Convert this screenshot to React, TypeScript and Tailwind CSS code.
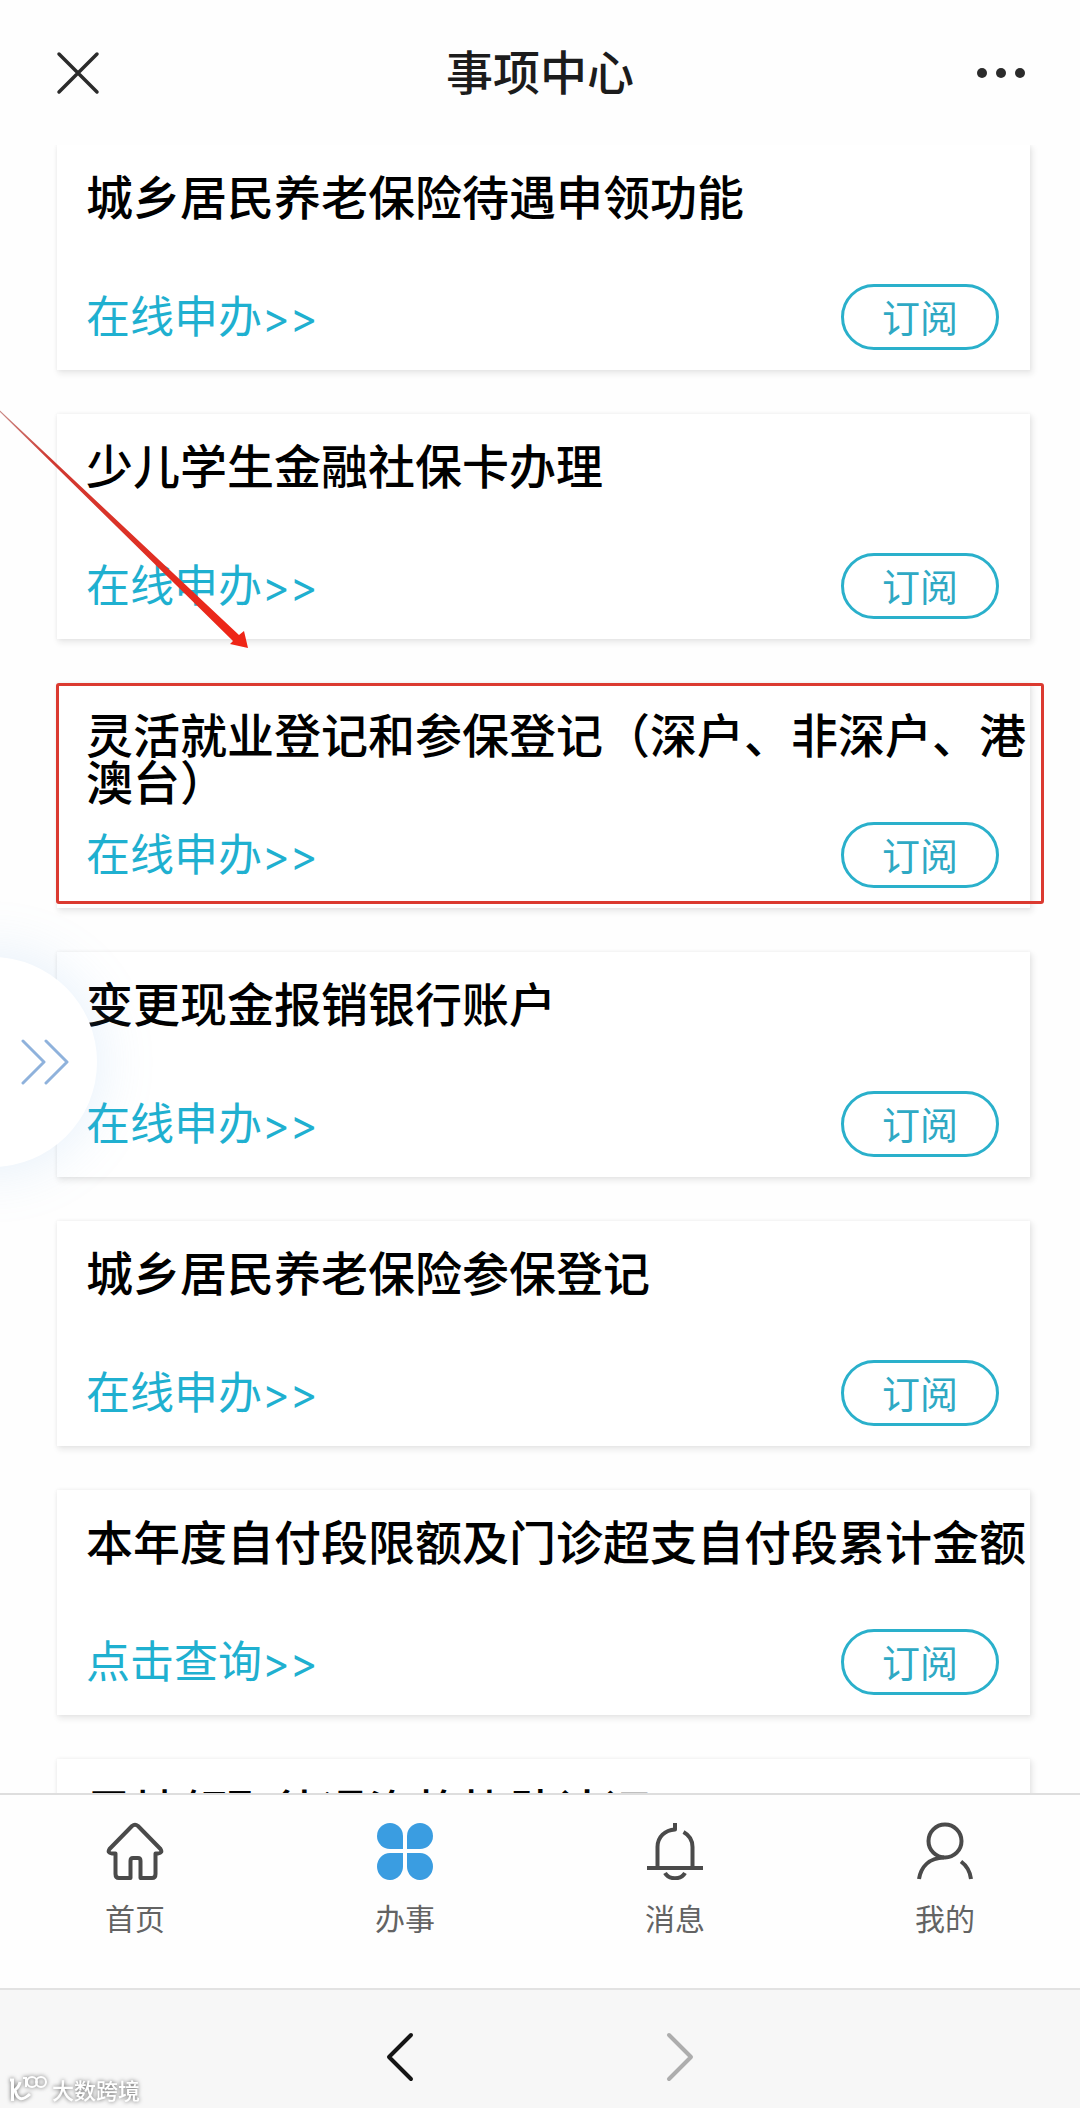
import React from "react";

type Item = { title: string; action: string; highlighted?: boolean };

const items: Item[] = [
  { title: "城乡居民养老保险待遇申领功能", action: "在线申办" },
  { title: "少儿学生金融社保卡办理", action: "在线申办" },
  { title: "灵活就业登记和参保登记（深户、非深户、港澳台）", action: "在线申办", highlighted: true },
  { title: "变更现金报销银行账户", action: "在线申办" },
  { title: "城乡居民养老保险参保登记", action: "在线申办" },
  { title: "本年度自付段限额及门诊超支自付段累计金额", action: "点击查询" },
  { title: "异地领取待遇资格协助认证", action: "在线申办" },
];

function HomeIcon() {
  return (
    <svg viewBox="0 0 58 58" className="size-[58px]" fill="none" stroke="#4a4a4a" strokeWidth="4" strokeLinejoin="round" strokeLinecap="round">
      <path d="M26 4Q29 1.500 32 4L54.500 27Q57 31 52 31.500H49.500V52Q49.500 56 46 56H34.500V39Q34.500 36 32 36H27Q24.500 36 24.500 39V56H13Q9.500 56 9.500 52V31.500H6Q1 31 3.500 27Z" />
    </svg>
  );
}

function ServiceIcon() {
  return (
    <svg viewBox="0 0 58 58" className="size-[58px]" fill="#3a9de1">
      <path d="M14 1A13 13 0 0 1 27 14V27H14A13 13 0 0 1 14 1Z" />
      <path d="M44 1A13 13 0 0 1 44 27H31V14A13 13 0 0 1 44 1Z" />
      <path d="M14 31H27V44A13 13.500 0 1 1 14 31Z" />
      <path d="M31 31H44A13 13.500 0 1 1 31 44Z" />
    </svg>
  );
}

function BellIcon() {
  return (
    <svg viewBox="0 0 58 58" className="size-[58px]" fill="none" stroke="#4a4a4a" strokeWidth="4">
      <path d="M29 1V7.500C19 8 11.500 15 11.500 25V46" strokeLinejoin="round" />
      <path d="M37.500 10C43 13 46.500 18 46.500 25V46" />
      <path d="M1 46H57" />
      <path d="M19 51C23 58 35 58 39 51" />
    </svg>
  );
}

function UserIcon() {
  return (
    <svg viewBox="0 0 58 58" className="size-[58px]" fill="none" stroke="#4a4a4a" strokeWidth="4">
      <circle cx="29" cy="19" r="16.500" />
      <path d="M3 57C5 45 13 36 28 35.500" />
      <path d="M45 39.500C50.500 43.500 54 49 55 57" />
    </svg>
  );
}

const tabs = [
  { label: "首页", Icon: HomeIcon },
  { label: "办事", Icon: ServiceIcon },
  { label: "消息", Icon: BellIcon },
  { label: "我的", Icon: UserIcon },
];

function Card({ title, action, highlighted }: Item) {
  return (
    <li className="relative shrink-0 bg-white pt-[26px] pb-5 pl-[29px] shadow-[2px_3px_6px_1px_rgba(0,0,0,0.08),0_0_3px_1px_rgba(0,0,0,0.03)]">
      <h2 className="min-h-[94px] text-[47px] leading-[47px] font-medium text-black">{title}</h2>
      <div className="mt-[19px] flex items-start justify-between pr-[31px]">
        <a href="#apply" className="text-[44px] leading-[60px] text-[#1fb0d0]">
          {action}
          <span className="font-['Inter'] text-[42px]">&gt;&gt;</span>
        </a>
        <button type="button" className="h-[66px] w-[158px] rounded-full border-[3px] border-[#2ab0cb] pb-0.5 text-[38px] leading-[56px] text-[#2fa9c4]">
          订阅
        </button>
      </div>
      {highlighted && (
        <div className="pointer-events-none absolute top-0 -right-[14px] bottom-[4px] -left-px rounded-[3px] border-[3px] border-[#db3a30]" />
      )}
    </li>
  );
}

export default function App() {
  return (
    <div lang="zh-CN" className="relative flex h-screen flex-col overflow-hidden bg-[#fefefe] font-['Noto_Sans_CJK_SC',sans-serif]">
      <header className="grid h-[145px] shrink-0 grid-cols-[1fr_auto_1fr] items-center px-[54px]">
        <button type="button" aria-label="关闭" className="justify-self-start pl-[2px]">
          <svg viewBox="0 0 44 44" className="size-[44px]" fill="none" stroke="#2b2b2b" strokeWidth="3.500" strokeLinecap="round">
            <path d="M3 3L41 41M41 3L3 41" />
          </svg>
        </button>
        <h1 className="pb-[6px] text-[47px] leading-[60px] font-medium text-[#1c1c1c]">事项中心</h1>
        <button type="button" aria-label="更多" className="justify-self-end">
          <svg viewBox="0 0 50 12" className="h-[12px] w-[50px]" fill="#2b2b2b">
            <circle cx="6" cy="6" r="5" />
            <circle cx="25" cy="6" r="5" />
            <circle cx="44" cy="6" r="5" />
          </svg>
        </button>
      </header>

      <main className="min-h-0 flex-1 overflow-hidden">
        <ul className="flex flex-col gap-[44px] pr-[50px] pl-[57px]">
          {items.map((item) => (
            <Card key={item.title} {...item} />
          ))}
        </ul>
      </main>

      <nav className="grid h-[195px] shrink-0 grid-cols-4 border-t-2 border-[#dedede] bg-[#fefefe]">
        {tabs.map(({ label, Icon }) => (
          <a key={label} href="#tab" className="flex flex-col items-center gap-[15px] pt-[27px] text-[30px] leading-[44px] text-[#636363]">
            <Icon />
            {label}
          </a>
        ))}
      </nav>

      <footer className="relative flex h-[120px] shrink-0 items-center justify-center gap-[252px] border-t-2 border-[#e2e2e2] bg-[#f7f7f7] pt-4">
        <button type="button" aria-label="后退">
          <svg viewBox="0 0 28 50" className="h-[50px] w-[28px]" fill="none" stroke="#151515" strokeWidth="4" strokeLinecap="round" strokeLinejoin="round">
            <path d="M25 3L3 25L25 47" />
          </svg>
        </button>
        <button type="button" aria-label="前进">
          <svg viewBox="0 0 28 50" className="h-[50px] w-[28px]" fill="none" stroke="#adadad" strokeWidth="4" strokeLinecap="round" strokeLinejoin="round">
            <path d="M3 3L25 25L3 47" />
          </svg>
        </button>
        <div className="absolute bottom-[4px] left-[8px] flex items-center gap-[4px] drop-shadow-[0_0_2px_rgba(0,0,0,0.6)]">
          <svg viewBox="0 0 40 30" className="h-[30px] w-[40px]" fill="none" stroke="#fff" strokeWidth="3">
            <path d="M2 6H4.500V27M5 17Q11 14 12 8M7 16Q10 31 22 20" />
            <path d="M15 4H18V13" strokeWidth="2" />
            <circle cx="24" cy="8" r="5" strokeWidth="2" />
            <circle cx="33" cy="8" r="5" strokeWidth="2" />
          </svg>
          <span className="text-[22px] leading-[30px] font-medium text-white">大数跨境</span>
        </div>
      </footer>

      <button
        type="button"
        aria-label="展开"
        className="absolute top-[957px] -left-[113px] flex size-[210px] items-center justify-end rounded-full bg-white pr-[28px] shadow-[0_0_56px_4px_rgba(120,175,235,0.18)]"
      >
        <svg viewBox="0 0 48 46" className="h-[46px] w-[48px]" fill="none" stroke="#8fb2dc" strokeWidth="3" strokeLinecap="round" strokeLinejoin="round">
          <path d="M2 2L23 23L2 44M25 2L46 23L25 44" />
        </svg>
      </button>

      <svg viewBox="0 0 250 240" className="pointer-events-none absolute top-[410px] left-0 h-[240px] w-[250px]">
        <defs>
          <linearGradient id="arrow" x1="0" y1="0" x2="1" y2="1">
            <stop offset="0" stopColor="#c98a86" />
            <stop offset="0.200" stopColor="#cf3a32" />
            <stop offset="1" stopColor="#f02415" />
          </linearGradient>
        </defs>
        <path d="M0 0.500L239 225L244 221L248 238L230 234L233 231L0 2Z" fill="url(#arrow)" />
      </svg>
    </div>
  );
}
